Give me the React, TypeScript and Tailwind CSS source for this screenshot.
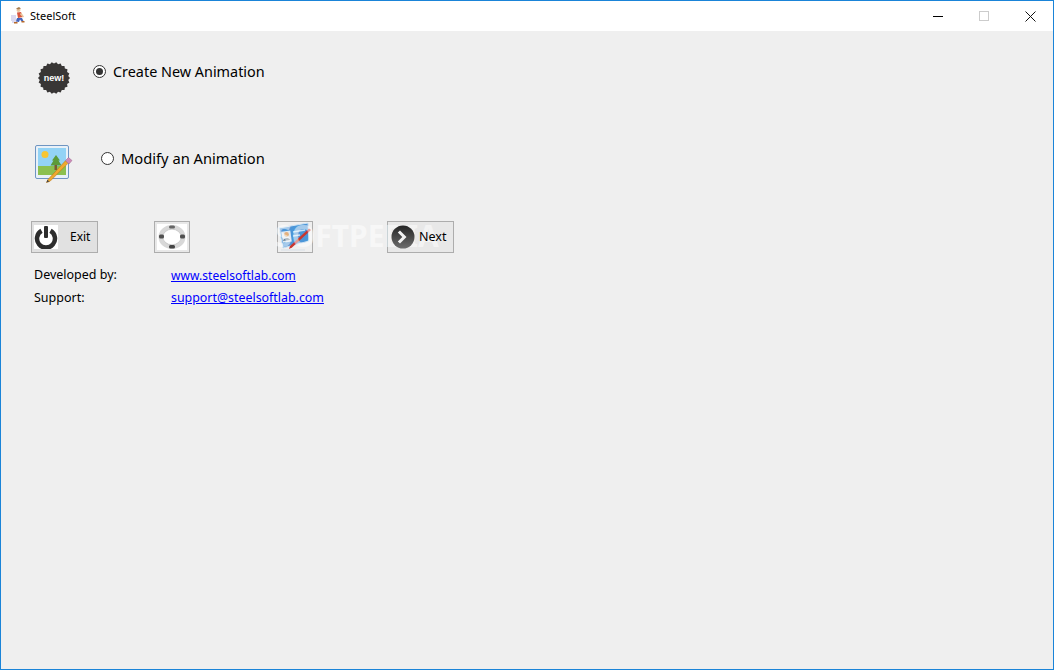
import type { ReactNode } from 'react'

const UI_FONT = "font-['Noto_Sans',sans-serif]"

function burstPoints() {
  const pts: string[] = []
  const teeth = 22
  for (let i = 0; i < teeth * 2; i++) {
    const r = i % 2 === 0 ? 16 : 14.4
    const a = (Math.PI * i) / teeth
    pts.push(`${(16 + r * Math.cos(a)).toFixed(2)},${(16 + r * Math.sin(a)).toFixed(2)}`)
  }
  return pts.join(' ')
}

function AppIcon() {
  return (
    <svg width="18" height="18" viewBox="0 0 18 18" className="shrink-0">
      <path d="M1 9h5M1 11h5M1 13h6M2 15h5" stroke="#b9b6e2" strokeWidth="1.200" />
      <circle cx="8.500" cy="3" r="2" fill="#e8c39c" />
      <path d="M6 1.500l3-1.500 2 1.500-3 1z" fill="#a67c4e" />
      <path d="M7 5.500l4-.5 2 5-5 1z" fill="#d9573f" />
      <path d="M11 5.500l3 4-1 1-3-3z" fill="#e8c39c" />
      <path d="M7 11h5l1.500 3-2 .5-1.500-2-1 2.500-3-.5z" fill="#4565bb" />
      <path d="M4 15h3.500v1.500H4zM11.500 14h3v1.500h-3z" fill="#b5682a" />
    </svg>
  )
}

function NewBadge() {
  return (
    <svg width="32" height="32" viewBox="0 0 32 32" className="shrink-0">
      <polygon points={burstPoints()} fill="#383635" />
      <text
        x="16"
        y="19"
        textAnchor="middle"
        fontSize="9"
        fontWeight="700"
        fill="#fff"
        fontFamily="'Liberation Sans', sans-serif"
      >
        new!
      </text>
    </svg>
  )
}

function PictureEditIcon() {
  return (
    <svg width="38" height="38" viewBox="0 0 38 38" className="shrink-0">
      <rect x="0.500" y="0.500" width="33" height="33" rx="1.500" fill="#e9f1f8" stroke="#6f95c2" />
      <rect x="3" y="3" width="28" height="27" fill="#93d3f5" />
      <rect x="3" y="21" width="28" height="9" fill="#8cc04f" />
      <circle cx="10" cy="9.500" r="3.500" fill="#f7c531" />
      <path d="M21 10l4 5.500h-1.500l3 5h-11l3-5H17z" fill="#5c9a38" />
      <rect x="19.500" y="20" width="2.500" height="5" fill="#7a5a32" />
      <path d="M13 34.500l-1.500 3 3.500-1.200 18-18-2.500-2.500z" fill="#f0a92d" stroke="#b9771c" strokeWidth="0.600" />
      <path d="M11.500 37.500l.8-2.800 2 1.800z" fill="#444" />
      <path d="M30.500 15.500l3-3 3.500 3-3 3.500z" fill="#cf8ab8" stroke="#97628a" strokeWidth="0.500" />
    </svg>
  )
}

function PowerIcon() {
  return (
    <svg width="24" height="24" viewBox="0 0 24 24" className="shrink-0">
      <rect width="24" height="24" fill="#fff" />
      <path d="M7.500 5.800a9 9 0 1 0 9 0" fill="none" stroke="#2d2d2d" strokeWidth="4.500" />
      <rect x="10" y="1" width="4" height="12" rx="1" fill="#2d2d2d" />
    </svg>
  )
}

function RingIcon() {
  return (
    <svg width="30" height="26" viewBox="0 0 30 26" className="shrink-0">
      <rect width="30" height="26" fill="#fff" />
      <ellipse cx="15" cy="13" rx="11.500" ry="10" fill="none" stroke="#d8d8d8" strokeWidth="4" />
      <ellipse cx="15" cy="13" rx="9.200" ry="7.800" fill="none" stroke="#b0b0b0" strokeWidth="0.600" />
      <rect x="12" y="1.500" width="6" height="3" rx="1.500" fill="#666" />
      <rect x="12" y="21" width="6" height="3.500" rx="1.500" fill="#444" />
      <rect x="2" y="10.500" width="5" height="4" rx="1.500" fill="#505050" />
      <rect x="23" y="10.500" width="5" height="4" rx="1.500" fill="#505050" />
    </svg>
  )
}

function CardIcon() {
  return (
    <svg width="34" height="30" viewBox="0 0 34 30" className="shrink-0">
      <path d="M1 6L30 1l1 18L5 26z" fill="#4b96d8" stroke="#cfe3f3" />
      <rect x="4" y="9" width="9" height="11" fill="#dfe9f2" transform="rotate(-8 9 14)" />
      <circle cx="8.500" cy="12.500" r="2.400" fill="#e3b07f" />
      <path d="M5 19c.5-3.500 6-4 7-1z" fill="#6d7f90" />
      <path d="M15 10l12-2M15 14l7-1" stroke="#c4e3f8" strokeWidth="1.500" />
      <path d="M12 24l-1 3 3-1.500L33 8l-2-1.500z" fill="#c9372f" />
      <path d="M3 28h24" stroke="#dfe5ea" strokeWidth="1.500" />
    </svg>
  )
}

function NextIcon() {
  return (
    <svg width="24" height="24" viewBox="0 0 24 24" className="relative z-10 shrink-0">
      <defs>
        <linearGradient id="nextFill" x1="0" y1="0" x2="0" y2="1">
          <stop offset="0" stopColor="#242424" />
          <stop offset="1" stopColor="#6e6e6e" />
        </linearGradient>
      </defs>
      <circle cx="12" cy="12" r="11.500" fill="url(#nextFill)" />
      <path d="M9 5.500l6.500 6.500L9 18.500 6.800 16.500 11.300 12 6.800 7.500z" fill="#f2f2f2" />
    </svg>
  )
}

function ToolButton({ className, children }: { className: string; children: ReactNode }) {
  return <div className={`flex items-center border border-[#adadad] ${className}`}>{children}</div>
}

function Radio({ checked }: { checked?: boolean }) {
  return (
    <span className="flex h-[13px] w-[13px] shrink-0 items-center justify-center rounded-full border border-[#333] bg-white">
      {checked && <span className="h-[7px] w-[7px] rounded-full bg-[#333]" />}
    </span>
  )
}

function WindowControls() {
  return (
    <div className="flex items-center">
      <div className="flex h-[30px] w-[46px] items-center justify-center">
        <span className="h-px w-[10px] bg-black" />
      </div>
      <div className="flex h-[30px] w-[46px] items-center justify-center">
        <span className="h-[10px] w-[10px] border border-[#cccccc]" />
      </div>
      <div className="flex h-[30px] w-[46px] items-center justify-center">
        <svg width="11" height="11" viewBox="0 0 11 11">
          <path d="M.5.5l10 10M10.500.5l-10 10" stroke="#111" strokeWidth="1" />
        </svg>
      </div>
    </div>
  )
}

export default function App() {
  return (
    <div className={`flex h-[670px] w-[1054px] flex-col overflow-hidden border border-[#1a84d8] bg-[#efefef] ${UI_FONT}`}>
      <header className="flex h-[30px] items-center justify-between bg-white pl-[9px]">
        <div className="flex items-center gap-[2px]">
          <AppIcon />
          <span className="text-[11px] text-black">SteelSoft</span>
        </div>
        <WindowControls />
      </header>

      <main className="relative flex-1 pl-[30px] pt-[31px] text-black">
        <div className="flex h-[32px] items-start">
          <div className="ml-[7px]"><NewBadge /></div>
          <div className="ml-[23px] flex h-[19px] items-center gap-[7px]">
            <Radio checked />
            <span className="text-[14.400px] leading-[18px]">Create New Animation</span>
          </div>
        </div>

        <div className="mt-[51px] flex h-[38px] items-start">
          <div className="ml-[4px]"><PictureEditIcon /></div>
          <div className="ml-[28px] flex h-[26px] items-center gap-[7px]">
            <Radio />
            <span className="text-[14.700px] leading-[20px]">Modify an Animation</span>
          </div>
        </div>

        <div className="mt-[38px] flex h-[32px] items-center">
          <ToolButton className="h-[32px] w-[67px] bg-[#e1e1e1] pl-[2px]">
            <PowerIcon />
            <span className="ml-[12px] text-[12px]">Exit</span>
          </ToolButton>
          <ToolButton className="ml-[56px] h-[32px] w-[36px] justify-center bg-[#e8e8e8]">
            <RingIcon />
          </ToolButton>
          <ToolButton className="ml-[87px] h-[32px] w-[36px] justify-center">
            <CardIcon />
          </ToolButton>
          <ToolButton className="ml-[74px] h-[32px] w-[67px] bg-[#e8e8e8] pl-[3px]">
            <NextIcon />
            <span className="relative z-10 ml-[4px] text-[12.500px]">Next</span>
          </ToolButton>
        </div>

        <div className="ml-[3px] mt-[11px] flex h-[23px] items-center text-[12.500px]">
          <span className="w-[137px]">Developed by:</span>
          <a className="text-[12px] tracking-[0.05px] text-[#0000ff] underline">www.steelsoftlab.com</a>
        </div>
        <div className="ml-[3px] flex h-[23px] items-center text-[12.500px]">
          <span className="w-[137px]">Support:</span>
          <a className="text-[12.400px] text-[#0000ff] underline">support@steelsoftlab.com</a>
        </div>

        {/* watermark sits over the button row */}
        <span className="pointer-events-none absolute left-[274px] top-[190px] text-[30px] font-bold leading-[30px] text-white/50">
          SOFTPEDIA
        </span>
      </main>
    </div>
  )
}
